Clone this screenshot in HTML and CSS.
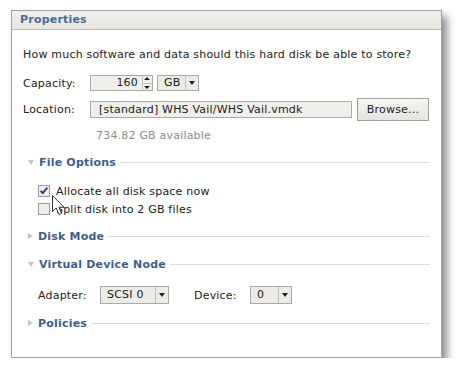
FILE: index.html
```html
<!DOCTYPE html>
<html lang="en">
<head>
    <meta charset="UTF-8">
    <title>Properties</title>
    <link rel="stylesheet" href="styles.css">
</head>
<body>
    <div class="panel">
        <div class="panel-head">Properties</div>
        <div class="panel-body">
            <p class="intro">How much software and data should this hard disk be able to store?</p>

            <div class="row capacity">
                <span class="label">Capacity:</span>
                <div class="spin">
                    <span class="spin-value">160</span>
                    <span class="spin-arrows">
                        <span class="up"></span>
                        <span class="down"></span>
                    </span>
                </div>
                <div class="select unit">
                    <span class="select-value">GB</span>
                    <span class="select-btn"></span>
                </div>
            </div>

            <div class="row location">
                <span class="label">Location:</span>
                <div class="field">[standard] WHS Vail/WHS Vail.vmdk</div>
                <button class="browse">Browse...</button>
            </div>

            <div class="avail">734.82 GB available</div>

            <!-- File Options -->
            <div class="section open first">
                <span class="arrow"></span>
                <span class="section-title">File Options</span>
                <span class="rule"></span>
            </div>
            <div class="section-body checks">
                <label class="check"><span class="box checked"></span>Allocate all disk space now</label>
                <label class="check"><span class="box"></span>Split disk into 2 GB files</label>
            </div>

            <div class="section after-checks">
                <span class="arrow"></span>
                <span class="section-title">Disk Mode</span>
                <span class="rule"></span>
            </div>

            <div class="section open">
                <span class="arrow"></span>
                <span class="section-title">Virtual Device Node</span>
                <span class="rule"></span>
            </div>
            <div class="section-body node">
                <span class="label short">Adapter:</span>
                <div class="select adapter">
                    <span class="select-value">SCSI 0</span>
                    <span class="select-btn"></span>
                </div>
                <span class="label short dev">Device:</span>
                <div class="select device">
                    <span class="select-value">0</span>
                    <span class="select-btn"></span>
                </div>
            </div>

            <div class="section last">
                <span class="arrow"></span>
                <span class="section-title">Policies</span>
                <span class="rule"></span>
            </div>
        </div>

        <!-- mouse pointer over the second checkbox -->
        <svg class="cursor" width="13" height="21" viewBox="0 0 13 21">
            <path d="M0.5 0.5 L0.5 16.5 L4.2 13 L7 19.5 L9.6 18.4 L7 12.3 L12 12.3 Z" fill="#fff" stroke="#333" stroke-width="1" stroke-linejoin="round"/>
        </svg>
    </div>
</body>
</html>
```

FILE: styles.css
```css
html, body {
    margin: 0;
    padding: 0;
    background: #fff;
    font-family: "DejaVu Sans", Verdana, sans-serif;
    font-size: 11px;
    letter-spacing: 0.2px;
    color: #222;
}
body {
    padding: 10px 0 0 11px;
}
.panel {
    position: relative;
    width: 429px;
    height: 346px;
    border: 1px solid #a2a2a2;
    background: #fff;
    box-shadow: 5px 6px 8px rgba(0, 0, 0, 0.45);
}
.panel-head {
    height: 18px;
    line-height: 18px;
    padding-left: 8px;
    background: linear-gradient(#f0efeb, #e8e6e1);
    border-bottom: 1px solid #bdbbb6;
    color: #4a6c98;
    font-weight: bold;
}
.panel-body {
    padding: 0 11px;
}
.intro {
    margin: 18px 0 0 0;
    line-height: 14px;
}
.row {
    display: flex;
    align-items: center;
}
.capacity {
    height: 16px;
    margin-top: 13px;
}
.location {
    height: 23px;
    margin-top: 7px;
}
.label {
    width: 67px;
    flex-shrink: 0;
}
.spin {
    display: flex;
    width: 61px;
    height: 14px;
    border: 1px solid #a9a9a9;
    background: #f1efe9;
}
.spin-value {
    flex: 1;
    text-align: right;
    padding-right: 4px;
    line-height: 14px;
}
.spin-arrows {
    width: 9px;
    display: flex;
    flex-direction: column;
    border-left: 1px solid #c4c2bc;
}
.spin-arrows span {
    flex: 1;
    position: relative;
}
.spin-arrows .up {
    border-bottom: 1px solid #c4c2bc;
}
.spin-arrows .up::after, .spin-arrows .down::after {
    content: "";
    position: absolute;
    left: 1px;
    border-left: 3px solid transparent;
    border-right: 3px solid transparent;
}
.spin-arrows .up::after {
    top: 1px;
    border-bottom: 3px solid #222;
}
.spin-arrows .down::after {
    top: 2px;
    border-top: 3px solid #222;
}
.select {
    display: flex;
    height: 16px;
    border: 1px solid #a9a9a9;
    background: #ecebe5;
}
.select-value {
    flex: 1;
    line-height: 16px;
    padding-left: 6px;
}
.select-btn {
    width: 12px;
    border-left: 1px solid #c4c2bc;
    position: relative;
}
.select-btn::after {
    content: "";
    position: absolute;
    left: 3px;
    top: 6px;
    border-left: 3px solid transparent;
    border-right: 3px solid transparent;
    border-top: 4px solid #222;
}
.unit {
    width: 40px;
    height: 14px;
    margin-left: 4px;
}
.unit .select-value {
    line-height: 14px;
}
.unit .select-btn::after {
    top: 5px;
}
.field {
    width: 252px;
    height: 15px;
    line-height: 15px;
    padding-left: 8px;
    border: 1px solid #a9a9a9;
    background: #f1efe9;
    white-space: nowrap;
    overflow: hidden;
}
.browse {
    margin-left: 5px;
    width: 72px;
    height: 23px;
    padding: 0;
    border: 1px solid #a0a0a0;
    background: linear-gradient(#f6f5f1, #e6e4dd);
    font-family: inherit;
    font-size: 11px;
    letter-spacing: 0.2px;
    color: #222;
}
.avail {
    margin: 8px 0 0 73px;
    line-height: 14px;
    color: #8c8c8c;
}
.section {
    display: flex;
    align-items: center;
    height: 16px;
    margin-top: 12px;
    padding-left: 5px;
}
.section.first {
    margin-top: 11px;
}
.section.after-checks {
    margin-top: 10px;
}
.section.last {
    margin-top: 11px;
}
.arrow {
    width: 0;
    height: 0;
    margin-right: 5px;
    border-top: 3px solid transparent;
    border-bottom: 3px solid transparent;
    border-left: 5px solid #c4c4c4;
}
.section.open .arrow {
    border-left: 3px solid transparent;
    border-right: 3px solid transparent;
    border-top: 5px solid #c4c4c4;
    border-bottom: 0;
}
.section-title {
    color: #3e5f8e;
    font-weight: bold;
}
.rule {
    flex: 1;
    height: 0;
    margin-left: 4px;
    border-top: 1px solid #dcdcdc;
}
.section-body {
    padding-left: 15px;
}
.checks {
    padding-top: 12px;
}
.check {
    display: flex;
    align-items: center;
    height: 18px;
}
.box {
    width: 10px;
    height: 10px;
    margin-right: 6px;
    border: 1px solid #9a9a9a;
    background: #f1efe9;
    position: relative;
}
.box.checked::after {
    content: "";
    position: absolute;
    left: 3px;
    top: 0;
    width: 2px;
    height: 6px;
    border-right: 2px solid #2e4a7a;
    border-bottom: 2px solid #2e4a7a;
    transform: rotate(40deg);
}
.node {
    display: flex;
    align-items: center;
    height: 18px;
    padding-top: 14px;
}
.label.short {
    width: 62px;
}
.label.dev {
    margin-left: 25px;
    width: 56px;
}
.adapter {
    width: 67px;
}
.device {
    width: 40px;
}
.cursor {
    position: absolute;
    left: 40px;
    top: 184px;
}
```
